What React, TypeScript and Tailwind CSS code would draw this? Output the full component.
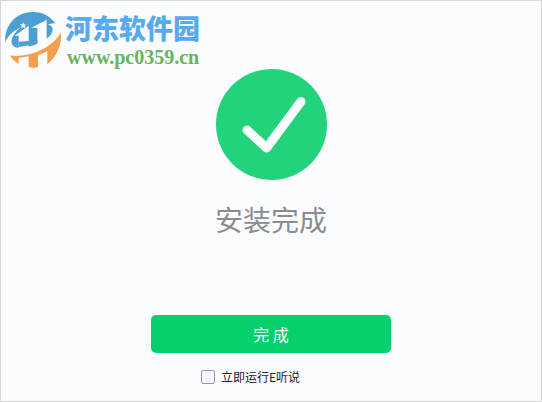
function Logo() {
  return (
    <svg viewBox="15 30 171 174" className="h-[58px] w-[57px] shrink-0" aria-hidden="true">
      <path
        d="M16 124 C12 76 46 34 96 33 C128 32 152 46 168 70 L158 100 L120 130 L70 145 L34 142Z"
        fill="#4b9fd3"
      />
      <path d="M44 104 L86 74 L86 125 L84 148 L56 148 L56 104Z" fill="#fbfcfe" />
      <path d="M94 80 L140 56 L140 130 L112 138 L112 80Z" fill="#fbfcfe" />
      <path d="M56 122 L112 118 L112 128 L56 138Z" fill="#4b9fd3" />
      <path
        d="M62 79 C34 92 12 116 14 140 C18 166 66 168 108 150 C150 134 182 104 182 80 C181 66 164 62 142 72 C162 72 162 92 148 106 C128 128 84 142 54 140 C26 138 28 108 62 79Z"
        fill="#fbfcfe"
      />
      <path
        d="M182 94 C188 132 166 172 142 189 L142 151 L114 163 L114 199 C105 201 95 201 86 199 L86 166 L56 171 L56 189 C45 183 36 174 29 163 C63 169 107 158 141 137 C163 123 177 108 182 94Z"
        fill="#f2a04e"
      />
      <path d="M70 64 L72 70 L79 71 L74 75 L76 82 L69 78 L63 82 L65 75 L60 70 L67 70Z" fill="#fbfcfe" />
    </svg>
  );
}

function CheckMark() {
  return (
    <svg viewBox="0 0 111 111" className="size-[111px] shrink-0" role="img" aria-label="安装完成">
      <circle cx="55.5" cy="55.5" r="55.5" fill="#23d37c" />
      <path
        d="M31 61 L50.500 79 L85 32.500"
        fill="none"
        stroke="#fff"
        strokeWidth="9"
        strokeLinecap="round"
        strokeLinejoin="round"
      />
    </svg>
  );
}

export default function App() {
  return (
    <div className="flex min-h-screen flex-col border border-[#d6d7da] bg-[#fafcff] font-['Noto_Sans_CJK_SC',sans-serif]">
      <header className="flex h-[68px] items-start gap-[3px] pt-[10px] pl-1">
        <Logo />
        <div className="flex flex-col">
          <span className="text-[27px] leading-[34px] font-black text-[#55aaf0]">河东软件园</span>
          <a
            href="#"
            className="pl-[2px] font-['Liberation_Serif',serif] text-[20px] leading-[24px] font-bold text-[#68b35c]"
          >
            www.pc0359.cn
          </a>
        </div>
      </header>
      <main className="flex flex-col items-center">
        <CheckMark />
        <h1 className="mt-[19px] text-[28px] leading-10 font-normal text-[#8c8c8c]">安装完成</h1>
        <button
          type="button"
          className="mt-[76px] h-[38px] w-[240px] rounded-[5px] bg-[#04d06c] text-base text-white"
        >
          完 成
        </button>
        <div className="mt-[14px] flex w-[240px] pl-[50px]">
          <label className="flex items-center gap-[6px] text-xs leading-5 text-[#222]">
            <input
              type="checkbox"
              className="size-[14px] appearance-none rounded-[2px] border border-[#9a99a8] bg-[#f7f6fb] checked:bg-[#04d06c]"
            />
            立即运行E听说
          </label>
        </div>
      </main>
    </div>
  );
}
